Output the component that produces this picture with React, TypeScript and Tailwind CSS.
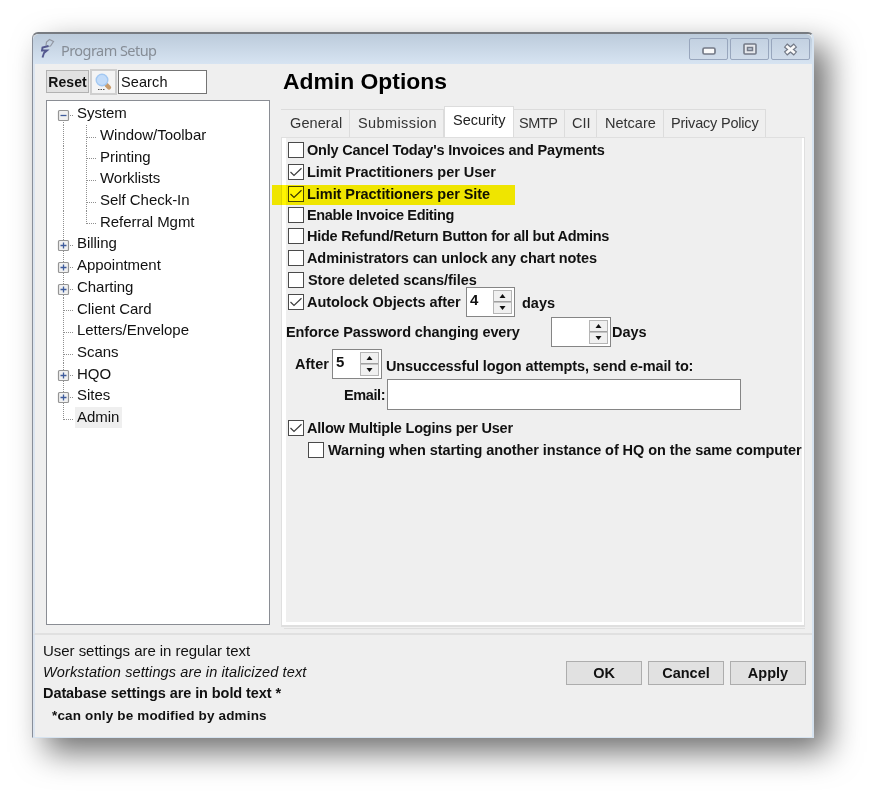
import type { ReactNode } from "react";

type TreeItem = {
  label: string;
  level: 0 | 1;
  toggle?: "plus" | "minus";
  first?: boolean;
  last?: boolean;
  selected?: boolean;
};

const tree: TreeItem[] = [
  { label: "System", level: 0, toggle: "minus", first: true },
  { label: "Window/Toolbar", level: 1 },
  { label: "Printing", level: 1 },
  { label: "Worklists", level: 1 },
  { label: "Self Check-In", level: 1 },
  { label: "Referral Mgmt", level: 1, last: true },
  { label: "Billing", level: 0, toggle: "plus" },
  { label: "Appointment", level: 0, toggle: "plus" },
  { label: "Charting", level: 0, toggle: "plus" },
  { label: "Client Card", level: 0 },
  { label: "Letters/Envelope", level: 0 },
  { label: "Scans", level: 0 },
  { label: "HQO", level: 0, toggle: "plus" },
  { label: "Sites", level: 0, toggle: "plus" },
  { label: "Admin", level: 0, last: true, selected: true },
];

const tabs = [
  { label: "General", cls: "w-[69px] pl-[9px] tracking-[0.1px]" },
  { label: "Submission", cls: "w-[94px] pl-2 tracking-[0.4px]" },
  { label: "Security", cls: "w-[70px] pl-2 tracking-[0px]", active: true },
  { label: "SMTP", cls: "w-[51px] pl-[5px] tracking-[-0.45px]" },
  { label: "CII", cls: "w-[32px] pl-[7px] tracking-[0px]" },
  { label: "Netcare", cls: "w-[67px] pl-2 tracking-[0px]" },
  { label: "Privacy Policy", cls: "w-[102px] pl-[7px] tracking-[-0.2px]" },
];

// Dotted connector lines plus the expand / collapse box of one tree row
function TreeGutter({ item }: { item: TreeItem }) {
  const sub = item.level === 1;
  const dots = { stroke: "#8f8f8f", strokeWidth: 1, strokeDasharray: "1 1" };
  return (
    <svg width={sub ? 51 : 28} height="21.7" className="shrink-0 overflow-visible">
      <line x1="16.5" x2="16.5" y1={item.first ? 13 : 0} y2={item.last && !sub ? 13 : 21.7} {...dots} />
      {sub && <line x1="39.5" x2="39.5" y1="0" y2={item.last ? 13 : 21.7} {...dots} />}
      <line x1={sub ? 40 : 17} x2={sub ? 50 : 27} y1="12.5" y2="12.5" {...dots} />
      {item.toggle && (
        <g>
          <rect x="11.5" y="7.5" width="10" height="10" rx="1" fill="#f1f1f1" stroke="#959595" strokeWidth="1.2" />
          <path d={item.toggle === "plus" ? "M13.5 12.5h6M16.5 9.5v6" : "M13.5 12.5h6"} stroke="#3f5c9c" strokeWidth="1.3" />
        </g>
      )}
    </svg>
  );
}

function Check({ on = false }: { on?: boolean }) {
  return (
    <span className="h-4 w-4 shrink-0 border border-[#4a4a4a] bg-white">
      {on && (
        <svg width="14" height="14" viewBox="0 0 14 14" fill="none" stroke="#3c3c3c" strokeWidth="1.2">
          <path d="M1.5 7L5 10.4L12.5 3.2" />
        </svg>
      )}
    </span>
  );
}

type OptionProps = { label: string; on?: boolean; cls?: string; track?: string };

function Option({ label, on, cls = "h-[22px]", track = "" }: OptionProps) {
  return (
    <div className={`flex items-center gap-[3px] pl-0.5 ${cls}`}>
      <Check on={on} />
      <span className={track}>{label}</span>
    </div>
  );
}

function Spinner({ value, cls }: { value?: string; cls: string }) {
  return (
    <div className={`flex shrink-0 justify-between border border-[#858585] bg-white p-[2px] ${cls}`}>
      <span className="pl-px text-[15px] leading-5">{value}</span>
      <div className="flex h-6 w-[19px] flex-col border border-[#b5b5b5] bg-[#f0f0f0]">
        <span className="flex flex-1 items-center justify-center border-b border-[#a0a0a0]">
          <svg width="7" height="4"><path d="M3.5 0L6.5 4H0.5Z" fill="#111" /></svg>
        </span>
        <span className="flex flex-1 items-center justify-center border-t border-[#c4c4c4]">
          <svg width="7" height="4"><path d="M0.5 0H6.5L3.5 4Z" fill="#111" /></svg>
        </span>
      </div>
    </div>
  );
}

function CaptionButton({ children }: { children: ReactNode }) {
  return (
    <button className="flex h-[22px] w-[39px] items-center justify-center rounded-[2px] border border-[#98a6bd] bg-linear-to-b from-[#c3d1e1] to-[#d0dcea]">
      {children}
    </button>
  );
}

function DialogButton({ label }: { label: string }) {
  return (
    <button className="h-6 w-[76px] border border-[#adadad] bg-[#e1e1e1] text-[14.5px] leading-[22px] font-bold">
      {label}
    </button>
  );
}

export default function App() {
  return (
    <div className="h-[803px] w-[879px] overflow-hidden bg-white pl-8 pt-8 font-['Liberation_Sans',Arial,sans-serif] text-[#111]">
      <div className="flex h-[706px] w-[782px] flex-col rounded-t-md border-t-2 border-r-2 border-b border-l border-t-[#777b81] border-r-[#d6e3f0] border-b-[#d6e3f0] border-l-[#888e99] bg-[#efefef] shadow-[14px_14px_32px_rgba(0,0,0,0.57)]">
        {/* Title bar */}
        <div className="flex h-[30px] shrink-0 items-center rounded-t-md bg-linear-to-b from-[#bccbdb] to-[#d7e4f2] pl-[7px] pr-0.5">
          <svg width="18" height="22" viewBox="0 0 18 22" fill="none">
            <path d="M6 7.5L6.5 4L9.5 1.5L13.5 3.5L10.5 8L6.5 8.5" stroke="#9297a2" strokeWidth="1.2" />
            <path d="M8.5 8L2.5 9.5L2 12.5L7 12.5L4 15L2.5 19.5" stroke="#54588f" strokeWidth="1.9" />
          </svg>
          <span className="ml-[3px] pt-[3px] font-['Noto_Sans','Open_Sans',sans-serif] text-[14.5px] tracking-[-0.55px] text-[#868d96]">
            Program Setup
          </span>
          <div className="ml-auto flex gap-0.5">
            <CaptionButton>
              <svg width="14" height="8" className="mt-1"><rect x="1" y="1" width="12" height="6" rx="1.5" fill="#fafafa" stroke="#747a87" strokeWidth="1.7" /></svg>
            </CaptionButton>
            <CaptionButton>
              <svg width="14" height="12">
                <rect x="1" y="1" width="12" height="10" rx="1" fill="#e6e8ec" stroke="#747a87" strokeWidth="1.6" />
                <rect x="4.5" y="4.5" width="5" height="3" fill="#c5d0de" stroke="#747a87" strokeWidth="1.5" />
              </svg>
            </CaptionButton>
            <CaptionButton>
              <svg width="15" height="13" viewBox="0 0 15 13">
                <path d="M2.5 2.2L12.5 10.8M12.5 2.2L2.5 10.8" stroke="#747a87" strokeWidth="5.2" />
                <path d="M3.3 3L11.7 10M11.7 3L3.3 10" stroke="#fafafa" strokeWidth="2.7" />
              </svg>
            </CaptionButton>
          </div>
        </div>

        <div className="flex h-[571px] shrink-0 border-b-2 border-l-2 border-b-[#e0e0e0] border-l-[#dce5f0] pl-[11px] pt-[5px]">
          {/* Left column */}
          <div className="w-[224px] shrink-0">
            <div className="flex h-[31px] items-start">
              <button className="mt-px h-[23px] w-[43px] border border-[#b2b2b2] bg-[#e1e1e1] text-[14px] leading-5 font-bold tracking-[0.1px]">
                Reset
              </button>
              <button className="ml-px flex h-[26px] w-[27px] items-center justify-center border-2 border-[#cfcfcf] bg-[#f4f4f4]">
                <svg width="19" height="20" viewBox="0 0 19 20">
                  <path d="M12.5 13L15 15.5" stroke="#c79c6e" strokeWidth="4.2" strokeLinecap="round" />
                  <circle cx="8" cy="8" r="5.8" fill="#c3dcf9" stroke="#a3c8f2" strokeWidth="1.4" />
                  <path d="M4 17.5h7" stroke="#555" strokeDasharray="1.5 1" />
                </svg>
              </button>
              <div className="ml-px mt-px h-6 w-[89px] border border-[#747474] bg-white pl-0.5 text-[14.5px] leading-[22px] tracking-[0.1px]">
                Search
              </div>
            </div>
            <div className="h-[525px] border border-[#8a8d94] bg-white pt-0.5">
              {tree.map((item) => (
                <div key={item.label} className="flex h-[21.7px] items-center">
                  <TreeGutter item={item} />
                  <span
                    className={`h-[21px] pl-0.5 pr-[3px] text-[15px] leading-[19px] tracking-[-0.04px] ${item.selected ? "bg-[#efefef]" : ""}`}
                  >
                    {item.label}
                  </span>
                </div>
              ))}
            </div>
          </div>

          {/* Right column */}
          <div className="ml-[11px] w-[524px]">
            <h1 className="h-9 pl-0.5 text-[22.9px] leading-[25px] font-bold text-black">Admin Options</h1>
            <div className="flex h-8 items-end">
              {tabs.map((t) => (
                <div
                  key={t.label}
                  className={`shrink-0 text-[14.5px] leading-5 whitespace-nowrap ${t.cls} ${
                    t.active
                      ? "h-[31px] border border-b-0 border-[#dcdcdc] bg-white pt-[3px] text-[#222]"
                      : "h-7 border-t border-r border-[#dcdcdc] pt-[3px] text-[#333]"
                  }`}
                >
                  {t.label}
                </div>
              ))}
            </div>
            <div className="h-[490px] border border-[#dfdfdf] border-b-2 bg-white pr-0.5 pb-[3px] pl-1">
              <div className="h-full bg-[#efefef] pt-px text-[14.5px] leading-5 font-bold whitespace-nowrap">
                <Option label="Only Cancel Today's Invoices and Payments" track="tracking-[-0.19px]" />
                <Option label="Limit Practitioners per User" track="tracking-[-0.05px]" on />
                <div className="relative">
                  <Option label="Limit Practitioners per Site" track="tracking-[-0.05px]" on />
                  {/* Marker stroke over the row */}
                  <div className="absolute top-0.5 -left-[14px] h-5 w-[243px] bg-[#fff500] mix-blend-multiply" />
                </div>
                <Option label="Enable Invoice Editing" cls="h-5" track="tracking-[-0.35px]" />
                <Option label="Hide Refund/Return Button for all but Admins" track="tracking-[-0.26px]" />
                <Option label="Administrators can unlock any chart notes" track="tracking-[-0.1px]" />
                <Option label="Store deleted scans/files" cls="h-[21px]" track="pl-px tracking-[-0.05px]" />
                <div className="-mt-[3px] flex h-[30px] items-center pl-0.5">
                  <Check on />
                  <span className="ml-[3px] w-[159px] tracking-[-0.05px]">Autolock Objects after</span>
                  <Spinner value="4" cls="h-[30px] w-[49px]" />
                  <span className="ml-[7px] pt-0.5">days</span>
                </div>
                <div className="flex h-[30px] items-center">
                  <span className="w-[265px] tracking-[-0.1px]">Enforce Password changing every</span>
                  <Spinner cls="h-[30px] w-[60px]" />
                  <span className="ml-px">Days</span>
                </div>
                <div className="mt-0.5 flex h-[30px] items-center pl-[9px]">
                  <span className="w-[37px]">After</span>
                  <Spinner value="5" cls="h-[30px] w-[50px]" />
                  <span className="ml-1 pt-1 tracking-[-0.12px]">Unsuccessful logon attempts, send e-mail to:</span>
                </div>
                <div className="flex h-[31px] items-center pl-[58px]">
                  <span className="w-[43px] tracking-[-0.4px]">Email:</span>
                  <div className="h-[31px] w-[354px] border border-[#858585] bg-white" />
                </div>
                <div className="mt-[7px]">
                  <Option label="Allow Multiple Logins per User" on track="tracking-[-0.2px]" />
                  <Option
                    label="Warning when starting another instance of HQ on the same computer"
                    cls="ml-[20px] h-[22px]"
                    track="pl-px tracking-[-0.07px]"
                  />
                </div>
              </div>
            </div>
            <div className="mt-px ml-[3px] h-px bg-[#dfdfdf]" />
          </div>
        </div>

        {/* Footer */}
        <div className="flex flex-1 justify-between border-l-2 border-l-[#dce5f0] pt-[5px] pr-[6px] pl-2">
          <div className="text-[14.5px] leading-[21.7px]">
            <p className="text-[15px] tracking-[-0.04px]">User settings are in regular text</p>
            <p className="text-[14.5px] tracking-[0.13px] italic">Workstation settings are in italicized text</p>
            <p className="font-bold tracking-[-0.08px]">Database settings are in bold text *</p>
            <p className="pl-[9px] text-[13.5px] font-bold tracking-[0.15px]">*can only be modified by admins</p>
          </div>
          <div className="mt-[21px] flex h-6 gap-1.5">
            <DialogButton label="OK" />
            <DialogButton label="Cancel" />
            <DialogButton label="Apply" />
          </div>
        </div>
      </div>
    </div>
  );
}
